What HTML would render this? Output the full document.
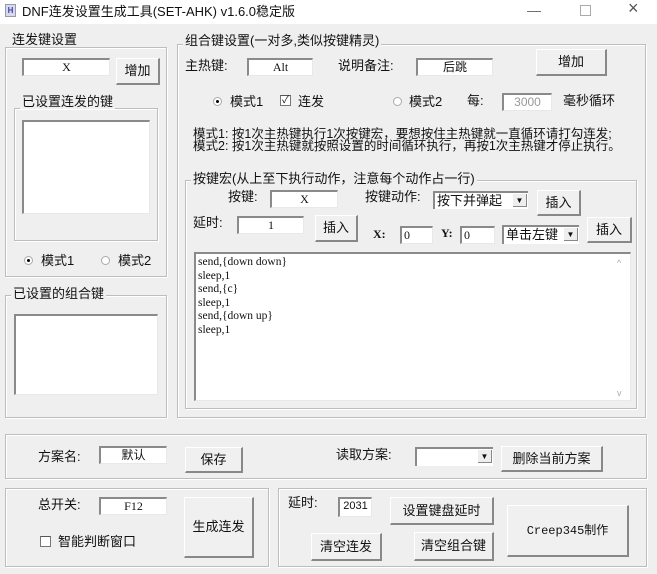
<!DOCTYPE html>
<html><head><meta charset="utf-8"><style>
*{box-sizing:border-box;margin:0;padding:0}
body{width:657px;height:574px;background:#efefef;position:relative;overflow:hidden;font-family:"Liberation Sans","Noto Sans CJK SC",sans-serif;font-size:12px;color:#111}
.a{position:absolute;white-space:nowrap;line-height:14px}
.g{position:absolute;border:1px solid #bdbdbd;box-shadow:inset 1px 1px 0 #fff,1px 1px 0 #fff}
.lg{position:absolute;background:#efefef;padding:0 2px;line-height:14px;font-size:13px}
.in{position:absolute;background:#fff;border-top:2px solid #8a8a8a;border-left:2px solid #8a8a8a;border-bottom:1px solid #e8e8e8;border-right:1px solid #e8e8e8;text-align:center;font-family:"Liberation Serif","Noto Serif CJK SC",serif;font-size:12px;line-height:14px}
.bt{position:absolute;background:#f0f0f0;border-top:1px solid #fff;border-left:1px solid #fff;border-right:2px solid #888;border-bottom:2px solid #888;text-align:center;font-size:13px;display:flex;align-items:center;justify-content:center;line-height:14px}
.cb{position:absolute;background:#fff;border-top:2px solid #8a8a8a;border-left:2px solid #8a8a8a;font-size:13px;line-height:15px;padding-left:2px}
.cb i{position:absolute;right:1px;top:1px;width:14px;height:13px;background:#eee;border-right:1px solid #888;border-bottom:1px solid #888;font-style:normal;font-size:8px;text-align:center;line-height:13px}
.rd{position:absolute;width:9px;height:9px;border-radius:50%;border:1px solid #aaa;background:#fff}
.rd.on::after{content:"";position:absolute;left:2px;top:2px;width:3px;height:3px;border-radius:50%;background:#000}
.ck{position:absolute;width:11px;height:11px;border:1px solid #777;border-top-color:#555;background:#fff;font-size:10px;line-height:9px;text-align:center}
</style></head><body>
<div class="a" style="left:0;top:0;width:657px;height:24px;background:#fff"></div>
<div class="a" style="left:5px;top:4px;width:11px;height:13px;background:#d8d8ee;border:1px solid #99a;font-size:8px;color:#44a;text-align:center;line-height:11px;font-weight:bold">H</div>
<div class="a" style="left:22px;top:5px;font-size:13px">DNF连发设置生成工具(SET-AHK) v1.6.0稳定版</div>
<div class="a" style="left:527px;top:3px;font-size:14px;color:#666">—</div>
<div class="a" style="left:580px;top:5px;width:11px;height:11px;border:1px solid #aaa"></div>
<div class="a" style="left:628px;top:1px;font-size:18px;color:#555">×</div>

<!-- left group -->
<div class="g" style="left:5px;top:47px;width:162px;height:230px"></div>
<div class="lg" style="left:10px;top:33px">连发键设置</div>
<div class="in" style="left:22px;top:58px;width:88px;height:18px">X</div>
<div class="bt" style="left:116px;top:58px;width:44px;height:27px">增加</div>
<div class="g" style="left:14px;top:108px;width:144px;height:133px"></div>
<div class="lg" style="left:20px;top:95px">已设置连发的键</div>
<div class="in" style="left:22px;top:120px;width:128px;height:94px"></div>
<div class="rd on" style="left:24px;top:256px"></div><div class="a" style="left:41px;top:254px;font-size:13px">模式1</div>
<div class="rd" style="left:101px;top:256px"></div><div class="a" style="left:118px;top:254px;font-size:13px">模式2</div>

<div class="g" style="left:5px;top:295px;width:162px;height:123px"></div>
<div class="lg" style="left:11px;top:287px">已设置的组合键</div>
<div class="in" style="left:14px;top:314px;width:144px;height:81px"></div>

<!-- right group -->
<div class="g" style="left:177px;top:44px;width:469px;height:374px"></div>
<div class="lg" style="left:183px;top:34px">组合键设置(一对多,类似按键精灵)</div>
<div class="a" style="left:185px;top:59px;font-size:13px">主热键:</div>
<div class="in" style="left:247px;top:58px;width:66px;height:18px">Alt</div>
<div class="a" style="left:338px;top:59px;font-size:13px">说明备注:</div>
<div class="in" style="left:416px;top:58px;width:77px;height:18px;font-family:'Noto Sans CJK SC',sans-serif;font-size:12px">后跳</div>
<div class="bt" style="left:536px;top:49px;width:71px;height:27px">增加</div>
<div class="rd on" style="left:213px;top:97px"></div><div class="a" style="left:230px;top:95px;font-size:13px">模式1</div>
<div class="ck" style="left:280px;top:95px">✓</div><div class="a" style="left:298px;top:95px;font-size:13px">连发</div>
<div class="rd" style="left:393px;top:97px"></div><div class="a" style="left:409px;top:95px;font-size:13px">模式2</div>
<div class="a" style="left:467px;top:94px;font-size:13px">每:</div>
<div class="in" style="left:502px;top:93px;width:50px;height:18px;color:#999;font-family:'Liberation Sans',sans-serif">3000</div>
<div class="a" style="left:563px;top:94px;font-size:13px">毫秒循环</div>
<div class="a" style="left:193px;top:128px;font-size:12.5px;line-height:12px">模式1: 按1次主热键执行1次按键宏，要想按住主热键就一直循环请打勾连发;<br>模式2: 按1次主热键就按照设置的时间循环执行，再按1次主热键才停止执行。</div>

<div class="g" style="left:185px;top:180px;width:452px;height:229px"></div>
<div class="lg" style="left:191px;top:172px">按键宏(从上至下执行动作，注意每个动作占一行)</div>
<div class="a" style="left:228px;top:190px;font-size:13px">按键:</div>
<div class="in" style="left:270px;top:190px;width:68px;height:18px">X</div>
<div class="a" style="left:365px;top:190px;font-size:13px">按键动作:</div>
<div class="cb" style="left:433px;top:191px;width:95px;height:18px">按下并弹起<i>▼</i></div>
<div class="bt" style="left:537px;top:190px;width:44px;height:26px">插入</div>
<div class="a" style="left:193px;top:216px;font-size:13px">延时:</div>
<div class="in" style="left:237px;top:216px;width:67px;height:18px">1</div>
<div class="bt" style="left:315px;top:215px;width:43px;height:27px">插入</div>
<div class="a" style="left:373px;top:227px;font-family:'Liberation Serif',serif;font-weight:bold">X:</div>
<div class="in" style="left:400px;top:226px;width:33px;height:18px;text-align:left;padding-left:2px">0</div>
<div class="a" style="left:441px;top:226px;font-family:'Liberation Serif',serif;font-weight:bold">Y:</div>
<div class="in" style="left:460px;top:226px;width:35px;height:18px;text-align:left;padding-left:2px">0</div>
<div class="cb" style="left:502px;top:225px;width:77px;height:19px">单击左键<i>▼</i></div>
<div class="bt" style="left:587px;top:217px;width:45px;height:26px">插入</div>
<div class="in" style="left:194px;top:252px;width:437px;height:149px;text-align:left;padding:2px 0 0 2px;font-size:11.5px;line-height:13.5px">send,{down down}<br>sleep,1<br>send,{c}<br>sleep,1<br>send,{down up}<br>sleep,1</div>
<div class="a" style="left:617px;top:256px;font-size:9px;color:#aaa">^</div>
<div class="a" style="left:617px;top:386px;font-size:9px;color:#aaa">v</div>

<!-- bottom -->
<div class="g" style="left:5px;top:434px;width:642px;height:45px"></div>
<div class="a" style="left:38px;top:450px;font-size:13px">方案名:</div>
<div class="in" style="left:99px;top:446px;width:68px;height:18px;font-family:'Noto Sans CJK SC',sans-serif">默认</div>
<div class="bt" style="left:185px;top:447px;width:58px;height:26px">保存</div>
<div class="a" style="left:336px;top:448px;font-size:13px">读取方案:</div>
<div class="cb" style="left:415px;top:447px;width:78px;height:19px"><i>▼</i></div>
<div class="bt" style="left:501px;top:446px;width:102px;height:26px">删除当前方案</div>

<div class="g" style="left:5px;top:488px;width:264px;height:79px"></div>
<div class="a" style="left:38px;top:498px;font-size:13px">总开关:</div>
<div class="in" style="left:99px;top:497px;width:68px;height:18px">F12</div>
<div class="bt" style="left:184px;top:497px;width:70px;height:61px">生成连发</div>
<div class="ck" style="left:40px;top:536px"></div><div class="a" style="left:58px;top:535px;font-size:13px">智能判断窗口</div>

<div class="g" style="left:278px;top:488px;width:369px;height:79px"></div>
<div class="a" style="left:288px;top:496px;font-size:13px">延时:</div>
<div class="in" style="left:338px;top:497px;width:34px;height:20px;font-family:'Liberation Sans',sans-serif;font-size:11px">2031</div>
<div class="bt" style="left:390px;top:497px;width:104px;height:28px">设置键盘延时</div>
<div class="bt" style="left:507px;top:505px;width:122px;height:52px;font-family:'Liberation Mono','Noto Sans CJK SC',monospace;font-size:12px">Creep345制作</div>
<div class="bt" style="left:311px;top:533px;width:71px;height:28px">清空连发</div>
<div class="bt" style="left:414px;top:532px;width:80px;height:29px">清空组合键</div>
</body></html>
